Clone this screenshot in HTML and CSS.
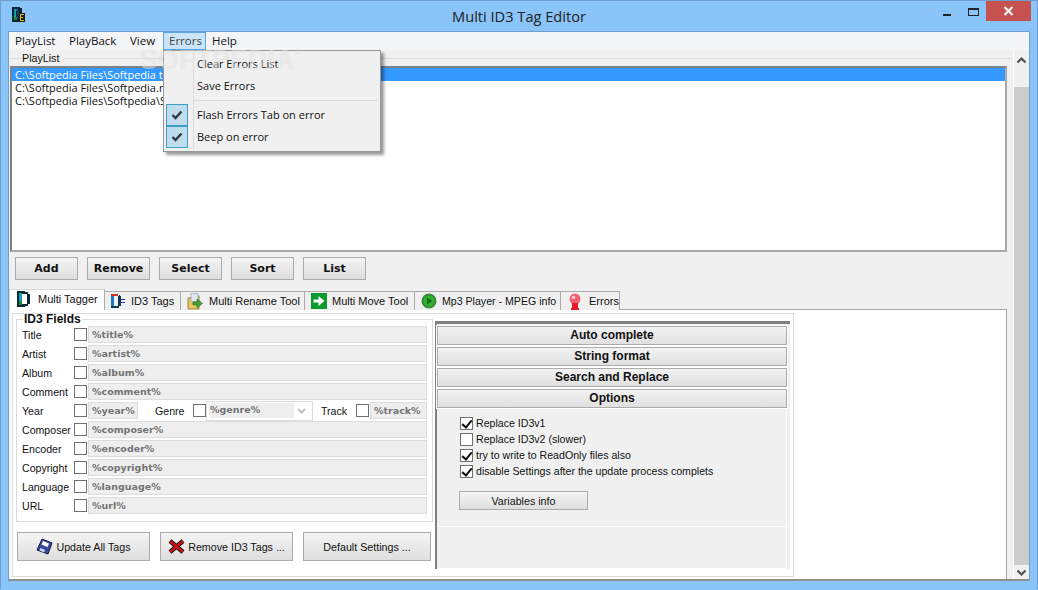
FILE: index.html
```html
<!DOCTYPE html>
<html lang="en">
<head>
<meta charset="utf-8">
<title>Multi ID3 Tag Editor</title>
<link rel="stylesheet" href="styles.css">
</head>
<body>
<div class="window">
  <header class="titlebar">
    <svg class="app-icon" width="13" height="16" viewBox="0 0 13 16" shape-rendering="crispEdges">
      <rect x="0" y="0" width="8" height="15" fill="#0a2430"/>
      <rect x="8" y="1" width="2" height="5" fill="#0a2430"/>
      <rect x="2" y="2" width="2" height="8" fill="#18a0a8"/>
      <rect x="4" y="2" width="2" height="2" fill="#1060a0"/>
      <rect x="5" y="4" width="2" height="7" fill="#0c3a80"/>
      <rect x="2" y="10" width="3" height="3" fill="#1a8a3a"/>
      <rect x="7" y="6" width="6" height="9" fill="#1c1c10"/>
      <rect x="8" y="7" width="4" height="1" fill="#d8c020"/>
      <rect x="8" y="8" width="1" height="5" fill="#d8c020"/>
      <rect x="8" y="10" width="3" height="1" fill="#d8c020"/>
      <rect x="8" y="13" width="4" height="1" fill="#d8c020"/>
    </svg>
    <div class="title">Multi ID3 Tag Editor</div>
    <div class="caption">
      <span class="cap-min"></span>
      <span class="cap-max"></span>
      <span class="cap-close">
        <svg width="11" height="10" viewBox="0 0 11 10"><path d="M1.5 1 L9.5 9 M9.5 1 L1.5 9" stroke="#fff" stroke-width="2"/></svg>
      </span>
    </div>
  </header>

  <div class="client">
    <nav class="menubar">
      <span class="menu-item">PlayList</span>
      <span class="menu-item">PlayBack</span>
      <span class="menu-item">View</span>
      <span class="menu-item open">Errors</span>
      <span class="menu-item">Help</span>
    </nav>

    <div class="workspace">
      <main class="main">
        <div class="legend-row">
          <span class="legend-line short"></span>
          <span class="legend-text">PlayList</span>
          <span class="legend-line"></span>
        </div>
        <div class="listbox">
          <div class="list-row selected">C:\Softpedia Files\Softpedia test.mp3</div>
          <div class="list-row">C:\Softpedia Files\Softpedia.mp3</div>
          <div class="list-row">C:\Softpedia Files\Softpedia\Softpedia.mp3</div>
        </div>
        <div class="list-actions">
          <button class="btn-bold">Add</button>
          <button class="btn-bold">Remove</button>
          <button class="btn-bold">Select</button>
          <button class="btn-bold">Sort</button>
          <button class="btn-bold">List</button>
        </div>

        <div class="tabs">
          <div class="tab active tab-1">
            <svg width="14" height="16" viewBox="0 0 14 16" shape-rendering="crispEdges"><rect x="0" y="0" width="8" height="16" fill="#0a2a38"/><rect x="8" y="1" width="3" height="14" fill="#0a2a38"/><rect x="11" y="3" width="2" height="10" fill="#0a2a38"/><rect x="2" y="2" width="3" height="12" fill="#18a0b8"/><rect x="5" y="3" width="5" height="10" fill="#fff"/><rect x="2" y="10" width="3" height="4" fill="#1a8a3a"/></svg>
            <span>Multi Tagger</span>
          </div>
          <div class="tab tab-2">
            <svg width="16" height="16" viewBox="0 0 16 16" shape-rendering="crispEdges"><rect x="1" y="1" width="3" height="14" fill="#1878c8"/><rect x="1" y="1" width="7" height="2" fill="#d83020"/><rect x="1" y="13" width="8" height="2" fill="#103858"/><rect x="8" y="3" width="3" height="10" fill="#103858"/><rect x="9" y="2" width="1" height="1" fill="#103858"/><rect x="11" y="6" width="4" height="1" fill="#2838a8"/><rect x="11" y="9" width="4" height="1" fill="#2838a8"/></svg>
            <span>ID3 Tags</span>
          </div>
          <div class="tab tab-3">
            <svg width="16" height="17" viewBox="0 0 16 17"><path d="M1 5h3l1-2h7v13H1z" fill="#e8c860" stroke="#8a7030" stroke-width=".8"/><rect x="4" y="0.5" width="7" height="8" fill="#dfe8f0" stroke="#8898a8" stroke-width=".6"/><path d="M6 9h4V6l5.5 4.5L10 15v-3H6z" fill="#48a038" stroke="#2a6a20" stroke-width=".6"/></svg>
            <span>Multi Rename Tool</span>
          </div>
          <div class="tab tab-4">
            <svg width="16" height="16" viewBox="0 0 16 16"><rect width="16" height="16" fill="#0c9a2c"/><path d="M2.5 6.5h5V3l6 5-6 5V9.5h-5z" fill="#fff"/></svg>
            <span>Multi Move Tool</span>
          </div>
          <div class="tab tab-5">
            <svg width="16" height="16" viewBox="0 0 16 16"><circle cx="8" cy="8" r="7.5" fill="#3a8a38"/><circle cx="8" cy="8" r="5.5" fill="#30b030"/><path d="M6 4.5 L11.5 8 L6 11.5z" fill="#147018"/></svg>
            <span>Mp3 Player - MPEG info</span>
          </div>
          <div class="tab tab-6">
            <svg width="14" height="17" viewBox="0 0 14 17"><circle cx="7" cy="6" r="5.5" fill="#f06070"/><circle cx="5.5" cy="4.5" r="1.8" fill="#ffc8d0"/><rect x="4" y="10" width="6" height="5" fill="#e81828"/><rect x="3" y="15" width="8" height="2" fill="#e81828"/></svg>
            <span>Errors</span>
          </div>
        </div>

        <section class="tab-panel">
          <div class="tagger">
            <div class="tagger-left">
              <fieldset class="id3-group">
                <legend>ID3 Fields</legend>
                <div class="field"><label>Title</label><i class="check"></i><div class="input grow">%title%</div></div>
                <div class="field"><label>Artist</label><i class="check"></i><div class="input grow">%artist%</div></div>
                <div class="field"><label>Album</label><i class="check"></i><div class="input grow">%album%</div></div>
                <div class="field"><label>Comment</label><i class="check"></i><div class="input grow">%comment%</div></div>
                <div class="field">
                  <label>Year</label><i class="check"></i><div class="input year">%year%</div>
                  <label class="label-genre">Genre</label><i class="check"></i>
                  <div class="combo"><span class="combo-value">%genre%</span><svg width="9" height="6" viewBox="0 0 9 6"><path d="M1 1 L4.5 4.5 L8 1" fill="none" stroke="#c0c0c0" stroke-width="2"/></svg></div>
                  <label class="label-track">Track</label><i class="check"></i><div class="input grow">%track%</div>
                </div>
                <div class="field"><label>Composer</label><i class="check"></i><div class="input grow">%composer%</div></div>
                <div class="field"><label>Encoder</label><i class="check"></i><div class="input grow">%encoder%</div></div>
                <div class="field"><label>Copyright</label><i class="check"></i><div class="input grow">%copyright%</div></div>
                <div class="field"><label>Language</label><i class="check"></i><div class="input grow">%language%</div></div>
                <div class="field"><label>URL</label><i class="check"></i><div class="input grow">%url%</div></div>
              </fieldset>
              <div class="tag-actions">
                <button class="btn-wide">
                  <svg width="17" height="17" viewBox="0 0 17 17"><path d="M6 1 L16 5 L12 16 L1 12z" fill="#3a4a9a" stroke="#101840"/><path d="M7 3 L13 5.5 L11.5 9 L5.5 6.5z" fill="#fff"/><path d="M4.5 10 L9 12 L8 14.5 L3.5 12.5z" fill="#d0d8f0"/></svg>
                  <span>Update All Tags</span>
                </button>
                <button class="btn-wide">
                  <svg width="17" height="15" viewBox="0 0 17 15"><path d="M2 2 L15 13 M15 2 L2 13" stroke="#101010" stroke-width="4.4"/><path d="M2 2 L15 13 M15 2 L2 13" stroke="#d01018" stroke-width="2.4"/></svg>
                  <span>Remove ID3 Tags ...</span>
                </button>
                <button class="btn-wide btn-default">Default Settings ...</button>
              </div>
            </div>

            <div class="tagger-right">
              <div class="section-head">Auto complete</div>
              <div class="section-head">String format</div>
              <div class="section-head">Search and Replace</div>
              <div class="section-head">Options</div>
              <div class="options">
                <div class="opt"><i class="check on"></i>Replace ID3v1</div>
                <div class="opt"><i class="check"></i>Replace ID3v2 (slower)</div>
                <div class="opt"><i class="check on"></i>try to write to ReadOnly files also</div>
                <div class="opt"><i class="check on"></i>disable Settings after the update process complets</div>
                <button class="btn-vars">Variables info</button>
              </div>
              <div class="right-foot"></div>
            </div>
          </div>
        </section>
      </main>

      <aside class="scrollbar">
        <div class="scroll-arrow up">
          <svg width="11" height="7" viewBox="0 0 11 7"><path d="M1.5 5.5 L5.5 1.5 L9.5 5.5" fill="none" stroke="#505050" stroke-width="2.2"/></svg>
        </div>
        <div class="scroll-thumb"></div>
        <div class="scroll-arrow">
          <svg width="11" height="7" viewBox="0 0 11 7"><path d="M1.5 1.5 L5.5 5.5 L9.5 1.5" fill="none" stroke="#505050" stroke-width="2.2"/></svg>
        </div>
      </aside>
    </div>

    <div class="popup">
      <div class="pop-item">Clear Errors List</div>
      <div class="pop-item">Save Errors</div>
      <div class="pop-sep"></div>
      <div class="pop-item"><span class="pop-check"><svg width="12" height="10" viewBox="0 0 12 10"><path d="M1.5 5 L4.5 8 L10.5 1.5" fill="none" stroke="#303840" stroke-width="2.4"/></svg></span>Flash Errors Tab on error</div>
      <div class="pop-item"><span class="pop-check"><svg width="12" height="10" viewBox="0 0 12 10"><path d="M1.5 5 L4.5 8 L10.5 1.5" fill="none" stroke="#303840" stroke-width="2.4"/></svg></span>Beep on error</div>
    </div>

    <div class="watermark">SOFTPEDIA<sup>®</sup></div>
  </div>
</div>
</body>
</html>
```

FILE: styles.css
```css
* { box-sizing: border-box; }
html, body { margin: 0; padding: 0; }
body {
  width: 1038px;
  height: 590px;
  overflow: hidden;
  font-family: "Liberation Sans", sans-serif;
  font-size: 11px;
  color: #111;
}
.window {
  width: 1038px;
  height: 590px;
  background: #8ac4f9;
  border: 1px solid #6f9fd0;
  border-bottom-color: #8ac4f9;
  display: flex;
  flex-direction: column;
}
.titlebar {
  height: 30px;
  flex: none;
  position: relative;
  display: flex;
  align-items: flex-start;
}
.app-icon { margin: 6px 0 0 11px; }
.title {
  position: absolute;
  left: 0;
  right: 0;
  top: 5px;
  text-align: center;
  font-family: "Open Sans", sans-serif;
  font-size: 14.6px;
  line-height: 20px;
  color: #222;
}
.caption { margin-left: auto; display: flex; align-items: flex-start; }
.cap-min { width: 8px; height: 2px; margin: 13px 17px 0 0; background: #222; }
.cap-max { width: 11px; height: 8px; margin: 7px 7px 0 0; border: 1px solid #222; border-top-width: 2px; }
.cap-close {
  width: 45px;
  height: 20px;
  margin-right: 6px;
  background: #c75050;
  display: flex;
  align-items: center;
  justify-content: center;
}

.client {
  position: relative;
  margin: 0 7px;
  height: 550px;
  flex: none;
  background: #f0f0f0;
  border: 1px solid #6f9fd0;
  border-bottom: 2px solid #8e8e8e;
  display: flex;
  flex-direction: column;
}
.menubar {
  height: 18px;
  flex: none;
  background: #f4f5f7;
  display: flex;
  align-items: stretch;
  font-family: "Open Sans", sans-serif;
}
.menu-item { padding: 0 5px; line-height: 18px; font-size: 11.5px; border: 1px solid transparent; border-width: 0 1px; white-space: nowrap; }
.menu-item:nth-child(1) { width: 54px; flex: none; }
.menu-item:nth-child(2) { width: 61px; flex: none; }
.menu-item:nth-child(3) { width: 39px; flex: none; }
.menu-item.open {
  width: 43px;
  flex: none;
  background: #cce4f7;
  border: 1px solid #5aa7e0;
  line-height: 16px;
  color: #444;
}

.workspace { flex: 1; display: flex; min-height: 0; }
.main { width: 1004px; flex: none; padding-left: 1px; display: flex; flex-direction: column; }

.legend-row { height: 16px; flex: none; display: flex; align-items: center; }
.legend-line { flex: 1; height: 1px; background: #dcdcdc; }
.legend-line.short { flex: none; width: 12px; }
.legend-text { padding: 0 6px 0 0; font-size: 10.7px; line-height: 14px; }

.listbox {
  height: 186px;
  flex: none;
  width: 997px;
  background: #fff;
  border: 2px solid #a8a8a8;
  border-color: #7c8288 #a8a8a8 #a8a8a8 #7c8288;
  font-family: "Open Sans", sans-serif;
  font-size: 11px;
}
.list-row { height: 13px; line-height: 13px; padding-left: 3px; white-space: nowrap; }
.list-row.selected { background: #3399ff; color: #fff; }

.list-actions { height: 37px; flex: none; display: flex; gap: 9px; padding: 5px 0 0 5px; }
button { font-family: inherit; color: #111; cursor: default; }
.btn-bold {
  width: 63px;
  height: 23px;
  padding: 0;
  background: linear-gradient(#f4f4f4, #dedede);
  border: 1px solid #ababab;
  font-family: "DejaVu Sans", sans-serif;
  font-size: 11px;
  font-weight: 700;
}

.tabs { height: 21px; flex: none; display: flex; align-items: flex-end; position: relative; z-index: 1; }
.tab {
  height: 19px;
  background: #f0f0f0;
  border: 1px solid #ababab;
  border-bottom: 0;
  border-left: 0;
  display: flex;
  align-items: center;
  white-space: nowrap;
  font-size: 11px;
}
.tab.active { height: 21px; background: #fff; border: 1px solid #d8d8d8; border-bottom: 0; border-right-color: #ababab; margin-left: -1px; padding-bottom: 2px; }
.tab-1 { width: 96px; padding-left: 7px; gap: 7px; }
.tab-2 { width: 76px; padding-left: 5px; gap: 5px; }
.tab-3 { width: 124px; padding-left: 6px; gap: 6px; }
.tab-4 { width: 110px; padding-left: 6px; gap: 5px; }
.tab-5 { width: 146px; padding-left: 6px; gap: 5px; font-size: 10.6px; }
.tab-6 { width: 59px; padding-left: 7px; gap: 7px; }

.tab-panel {
  width: 997px;
  height: 270px;
  flex: none;
  background: #fff;
  border-top: 1px solid #ababab;
  border-right: 1px solid #ababab;
  padding: 3px 0 0 2px;
  margin-top: -1px;
}
.tagger {
  width: 782px;
  height: 264px;
  background: #fff;
  border: 1px solid #dcdcdc;
  display: flex;
  padding-left: 3px;
}
.tagger-left { width: 417px; flex: none; display: flex; flex-direction: column; }
.id3-group {
  margin: 0;
  padding: 1px 0 0 5px;
  width: 417px;
  height: 208px;
  border: 1px solid #dcdcdc;
}
.id3-group legend {
  margin-left: 1px;
  padding: 0 1px;
  font-family: "Liberation Sans", sans-serif;
  font-size: 12px;
  font-weight: 700;
  line-height: 10px;
}
.field { height: 19px; display: flex; align-items: center; padding-right: 5px; }
.field label { width: 52px; flex: none; font-size: 10.6px; white-space: nowrap; }
.field label.label-genre { width: 38px; margin-left: 17px; }
.field label.label-track { width: 35px; margin-left: 8px; }
.check {
  display: block;
  width: 13px;
  height: 13px;
  flex: none;
  background: #fff;
  border: 1px solid #707070;
}
.check.on { position: relative; }
.check.on::after {
  content: "";
  position: absolute;
  left: 3px;
  top: 0;
  width: 4px;
  height: 8px;
  border: solid #111;
  border-width: 0 2px 2px 0;
  transform: rotate(40deg);
}
.input, .combo-value {
  font-family: "DejaVu Sans", sans-serif;
  font-size: 9.5px;
  font-weight: 700;
  color: #747474;
}
.input {
  margin-left: 1px;
  height: 17px;
  line-height: 15px;
  padding-left: 3px;
  background: #eee;
  border: 1px solid #dcdcdc;
  white-space: nowrap;
}
.input.grow { flex: 1; }
.input.year { width: 50px; flex: none; }
.combo {
  width: 107px;
  height: 20px;
  flex: none;
  background: #fff;
  border: 1px solid #dcdcdc;
  display: flex;
  align-items: center;
  padding: 0 6px 0 2px;
  justify-content: space-between;
}
.combo-value { background: #eee; width: 85px; height: 15px; line-height: 13px; padding-left: 1px; }
.tag-actions { display: flex; gap: 10px; padding: 10px 0 0 1px; }
.btn-wide {
  width: 133px;
  height: 29px;
  padding: 0;
  background: linear-gradient(#f4f4f4, #dedede);
  border: 1px solid #ababab;
  font-size: 10.7px;
  display: flex;
  align-items: center;
  justify-content: center;
  gap: 3px;
}
.btn-default { width: 128px; }

.tagger-right {
  width: 355px;
  height: 248px;
  margin: 7px 0 0 2px;
  flex: none;
  background: #f0f0f0;
  border-left: 2px solid #808080;
  border-top: 3px solid #808080;
  padding: 2px 3px 0 0;
  display: flex;
  flex-direction: column;
}
.section-head {
  height: 19px;
  margin-bottom: 2px;
  flex: none;
  background: linear-gradient(#f2f2f2, #e0e0e0);
  border: 1px solid #ababab;
  outline: 1px solid #fff;
  text-align: center;
  line-height: 17px;
  font-family: "Liberation Sans", sans-serif;
  font-size: 12px;
  font-weight: 700;
}
.options {
  height: 117px;
  flex: none;
  padding: 5px 0 0 23px;
  border-bottom: 1px solid #fff;
  border-right: 1px solid #fff;
}
.opt { height: 16px; display: flex; align-items: center; gap: 3px; font-size: 10.6px; white-space: nowrap; }
.btn-vars {
  display: block;
  margin: 12px 0 0 -1px;
  width: 129px;
  height: 19px;
  padding: 0;
  background: linear-gradient(#f4f4f4, #dedede);
  border: 1px solid #ababab;
  font-size: 10.7px;
}
.right-foot { flex: 1; border-right: 1px solid #fff; border-bottom: 1px solid #fff; }

.scrollbar {
  width: 16px;
  flex: none;
  background: #f0f0f0;
  border-left: 1px solid #fff;
  display: flex;
  flex-direction: column;
}
.scroll-arrow { height: 14px; flex: none; display: flex; align-items: center; justify-content: center; background: #f0f0f0; }
.scroll-arrow.up { height: 37px; align-items: flex-start; padding-top: 7px; }
.scroll-thumb { flex: 1; background: #cdcdcd; }

.watermark {
  position: absolute;
  left: 131px;
  top: 4px;
  font-family: "Liberation Sans", sans-serif;
  font-size: 27px;
  font-weight: 700;
  line-height: 32px;
  color: rgba(255, 255, 255, 0.45);
  text-shadow: 0 0 1px rgba(0, 0, 0, 0.1);
  white-space: nowrap;
  pointer-events: none;
}
.watermark sup { font-size: 9px; vertical-align: 14px; font-weight: 400; }

.popup {
  position: absolute;
  left: 154px;
  top: 18px;
  width: 218px;
  height: 102px;
  background: #f0f0f0;
  border: 1px solid #979797;
  box-shadow: 3px 3px 3px rgba(0, 0, 0, 0.4);
  padding: 2px;
  font-family: "Open Sans", sans-serif;
}
.popup::before {
  content: "";
  position: absolute;
  left: 29px;
  top: 2px;
  bottom: 2px;
  width: 1px;
  background: #dcdcdc;
}
.pop-item {
  position: relative;
  height: 22px;
  line-height: 22px;
  padding-left: 31px;
  font-size: 11px;
  white-space: nowrap;
}
.pop-sep { height: 4px; margin: 3px 0 0 28px; border-top: 1px solid #dcdcdc; }
.pop-check {
  position: absolute;
  left: 0;
  top: 0;
  width: 22px;
  height: 22px;
  background: #c0dded;
  border: 1px solid #3f9dc9;
  display: flex;
  align-items: center;
  justify-content: center;
}
```
